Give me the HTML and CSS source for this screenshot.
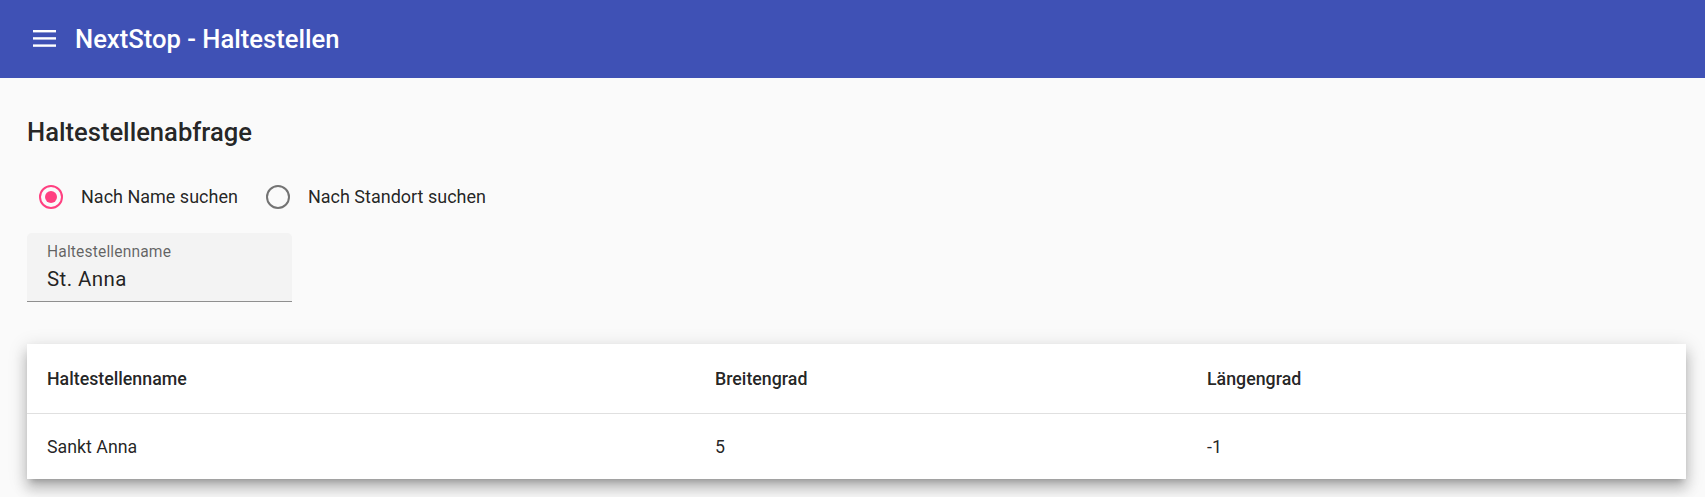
FILE: index.html
```html
<!DOCTYPE html>
<html lang="de">
<head>
<meta charset="utf-8">
<title>NextStop - Haltestellen</title>
<link rel="stylesheet" href="styles.css">
</head>
<body>
<header class="toolbar">
  <svg class="menu-icon" width="23" height="17" viewBox="0 0 23 17" aria-hidden="true">
    <rect x="0" y="0" width="23" height="2.4" fill="#fff"/>
    <rect x="0" y="7.2" width="23" height="2.4" fill="#fff"/>
    <rect x="0" y="14.4" width="23" height="2.4" fill="#fff"/>
  </svg>
  <span class="toolbar-title">NextStop - Haltestellen</span>
</header>
<main class="content">
  <h2 class="heading">Haltestellenabfrage</h2>
  <div class="radio-group">
    <label class="radio">
      <span class="radio-circle checked"><span class="radio-dot"></span></span>
      <span class="radio-label">Nach Name suchen</span>
    </label>
    <label class="radio">
      <span class="radio-circle"></span>
      <span class="radio-label">Nach Standort suchen</span>
    </label>
  </div>
  <div class="field">
    <span class="field-label">Haltestellenname</span>
    <span class="field-value">St. Anna</span>
  </div>
  <div class="card">
    <div class="row header-row">
      <div class="cell first">Haltestellenname</div>
      <div class="cell">Breitengrad</div>
      <div class="cell">Längengrad</div>
    </div>
    <div class="row data-row">
      <div class="cell first">Sankt Anna</div>
      <div class="cell">5</div>
      <div class="cell">-1</div>
    </div>
  </div>
</main>
</body>
</html>
```
FILE: styles.css
```css
* { box-sizing: border-box; }
html, body {
  margin: 0;
  padding: 0;
  background: #fafafa;
  font-family: Roboto, "Liberation Sans", sans-serif;
  color: rgba(0, 0, 0, 0.87);
}
body { min-height: 497px; }
.toolbar {
  height: 78px;
  background: #3f51b5;
  color: #fff;
  display: flex;
  align-items: center;
  padding-left: 33px;
}
.menu-icon {
  display: block;
  margin-top: -1px;
  flex: none;
}
.toolbar-title {
  margin-left: 19px;
  font-size: 25.6px;
  font-weight: 500;
  line-height: 32px;
}
.content {
  padding: 38px 19px 20px 27px;
}
.heading {
  margin: 0;
  font-size: 25.6px;
  font-weight: 500;
  line-height: 32px;
  height: 32px;
}
.radio-group {
  display: flex;
  align-items: center;
  margin-top: 25px;
  height: 48px;
}
.radio {
  display: flex;
  align-items: center;
  height: 48px;
}
.radio + .radio { margin-left: 16px; }
.radio-circle {
  width: 48px;
  height: 48px;
  display: flex;
  align-items: center;
  justify-content: center;
  position: relative;
}
.radio-circle::before {
  content: "";
  width: 24px;
  height: 24px;
  border-radius: 50%;
  border: 2.4px solid rgba(0, 0, 0, 0.54);
  box-sizing: border-box;
}
.radio-circle.checked::before { border-color: #ff4081; }
.radio-dot {
  position: absolute;
  left: 18px;
  top: 18px;
  width: 12px;
  height: 12px;
  border-radius: 50%;
  background: #ff4081;
}
.radio-label {
  margin-left: 6px;
  font-size: 18px;
  line-height: 24px;
  color: rgba(0, 0, 0, 0.87);
}
.field {
  margin-top: 12px;
  width: 265px;
  height: 69px;
  background: #f3f3f3;
  border-radius: 5px 5px 0 0;
  border-bottom: 1px solid #8f8f8f;
  padding: 10px 20px 0 20px;
  display: flex;
  flex-direction: column;
}
.field-label {
  font-size: 15.6px;
  line-height: 18px;
  color: rgba(0, 0, 0, 0.6);
  letter-spacing: 0.15px;
}
.field-value {
  margin-top: 6px;
  font-size: 20.5px;
  line-height: 24px;
  letter-spacing: 0.4px;
  color: rgba(0, 0, 0, 0.87);
}
.card {
  margin-top: 42px;
  background: #fff;
  box-shadow: 0 6px 6px -4px rgba(0, 0, 0, 0.22),
              0 10px 12px 1px rgba(0, 0, 0, 0.16),
              0 4px 17px 2px rgba(0, 0, 0, 0.13);
}
.row {
  display: grid;
  grid-template-columns: 688px 492px 1fr;
  align-items: center;
}
.header-row {
  height: 70px;
  border-bottom: 1px solid #e0e0e0;
  font-weight: 500;
}
.data-row {
  height: 65px;
}
.cell {
  font-size: 17.8px;
  line-height: 22px;
}
.cell.first { padding-left: 20px; }
```
